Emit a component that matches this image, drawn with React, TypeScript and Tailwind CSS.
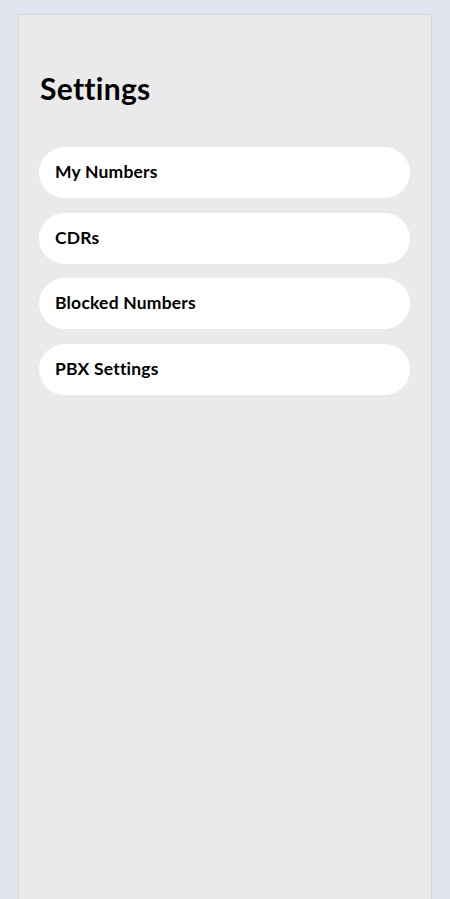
const items = ['My Numbers', 'CDRs', 'Blocked Numbers', 'PBX Settings']

export default function App() {
  return (
    <div
      className="min-h-[899px] bg-[#e1e3ef] pt-[14px] px-[18px] overflow-hidden"
      style={{ fontFamily: 'Lato, "Noto Sans", sans-serif' }}
    >
      <div className="h-[900px] bg-[#eaeaea] border border-[#d6d6d9] pl-[20px] pr-[21px] pt-[55px]">
        <h1 className="pl-[1px] text-[30px] font-bold text-black leading-[36px] tracking-[0.3px]">
          Settings
        </h1>
        <div className="mt-[41px] flex flex-col gap-[14.5px]">
          {items.map((item) => (
            <button
              key={item}
              className="h-[51px] w-full rounded-full bg-white text-left px-[16px] text-[17.5px] font-bold text-black tracking-[0.2px]"
            >
              {item}
            </button>
          ))}
        </div>
      </div>
    </div>
  )
}
